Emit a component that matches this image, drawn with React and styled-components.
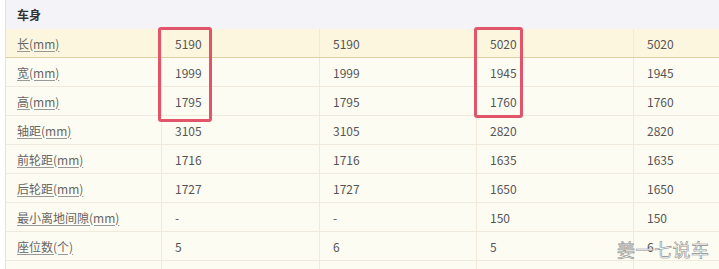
import React from 'react'
import styled, { createGlobalStyle } from 'styled-components'

const GlobalStyle = createGlobalStyle`
  html, body {
    margin: 0;
    padding: 0;
    background: #ffffff;
    overflow: hidden;
  }
  body {
    font-family: 'Noto Sans CJK SC', 'Noto Sans', sans-serif;
  }
`

const COLS = '155px 158px 157px 157px 157px'

const Page = styled.div`
  padding-left: 5px;
  width: 800px;
`

const Table = styled.div`
  position: relative;
  border-left: 1px solid #e2e2e2;
  background: #fdfcf3;
`

const HeadRow = styled.div`
  height: 29px;
  display: flex;
  align-items: center;
  padding-left: 11px;
  background: #f3f3f8;
  font-size: 12px;
  font-weight: bold;
  color: #333;
`

const Row = styled.div`
  display: grid;
  grid-template-columns: ${COLS};
  height: 28px;
  border-bottom: 1px solid ${p => (p.$active ? '#dccfa3' : '#efeadb')};
  background: ${p => (p.$active ? '#fcf6df' : '#fdfcf3')};
`

const LabelCell = styled.div`
  display: flex;
  align-items: center;
  padding-left: 11px;
  font-size: 12px;
`

const Label = styled.a`
  color: #666;
  text-decoration: underline;
  text-decoration-color: #999;
  text-underline-offset: 2px;
`

const Cell = styled.div`
  display: flex;
  align-items: center;
  padding-left: 13px;
  border-left: 1px solid #efeadb;
  font-size: 12px;
  color: #555;
`

const Mark = styled.div`
  position: absolute;
  top: 27px;
  left: ${p => p.$left}px;
  width: ${p => p.$width}px;
  height: ${p => p.$height}px;
  box-sizing: border-box;
  border: 3px solid #e2546a;
  border-radius: 3px;
`

const Watermark = styled.div`
  position: absolute;
  top: 236px;
  left: 611px;
  font-size: 18px;
  letter-spacing: 0.5px;
  color: rgba(255, 255, 255, 0.85);
  -webkit-text-stroke: 0.6px #8c8c8c;
  pointer-events: none;
`

const rows = [
  ['长(mm)', '5190', '5190', '5020', '5020'],
  ['宽(mm)', '1999', '1999', '1945', '1945'],
  ['高(mm)', '1795', '1795', '1760', '1760'],
  ['轴距(mm)', '3105', '3105', '2820', '2820'],
  ['前轮距(mm)', '1716', '1716', '1635', '1635'],
  ['后轮距(mm)', '1727', '1727', '1650', '1650'],
  ['最小离地间隙(mm)', '-', '-', '150', '150'],
  ['座位数(个)', '5', '6', '5', '6'],
  ['', '', '', '', ''],
]

export default function App() {
  return (
    <Page>
      <GlobalStyle />
      <Table>
        <HeadRow>车身</HeadRow>
        {rows.map(([label, ...vals], i) => (
          <Row key={i} $active={i === 0}>
            <LabelCell>{label && <Label>{label}</Label>}</LabelCell>
            {vals.map((v, j) => (
              <Cell key={j}>{v}</Cell>
            ))}
          </Row>
        ))}
        <Mark $left={152} $width={54} $height={95} />
        <Mark $left={468} $width={49} $height={91} />
        <Watermark>姜一七说车</Watermark>
      </Table>
    </Page>
  )
}
